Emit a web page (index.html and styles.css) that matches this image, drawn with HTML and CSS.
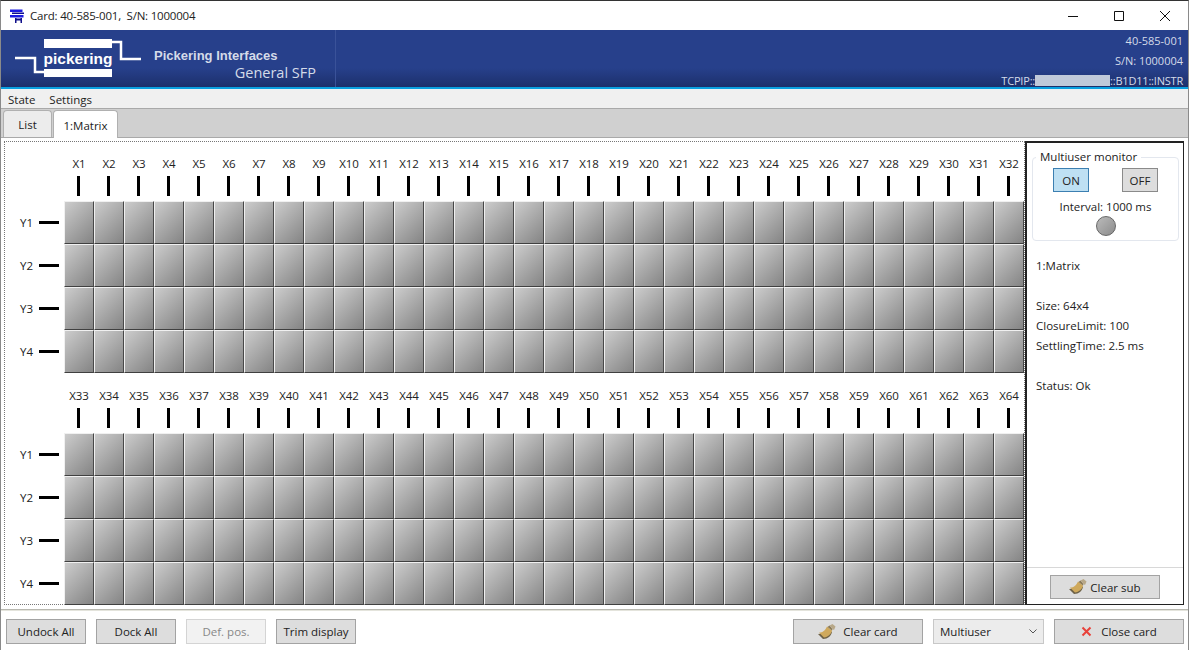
FILE: index.html
```html
<!DOCTYPE html>
<html lang="en">
<head>
    <meta charset="UTF-8">
    <title>Card: 40-585-001, S/N: 1000004</title>
    <link rel="stylesheet" href="styles.css">
</head>
<body>
<div class="window">
    <div class="titlebar">
        <svg class="app-icon" width="16" height="16" viewBox="0 0 16 16">
            <path d="M1 1.500h12.500v2.500H1z" fill="#1a1ae0"/>
            <path d="M3 4.500h12v1.500H3z" fill="#0a0a90"/>
            <path d="M1 7h13.500v2.500H1z" fill="#1a1ae0"/>
            <path d="M6 10h1.500v5H6zM11.500 10H13v5h-1.500zM7.500 10.500h4v2h-4z" fill="#10108a"/>
        </svg>
        <span class="title-text">Card: 40-585-001,&nbsp; S/N: 1000004</span>
        <div class="win-controls">
            <svg width="12" height="12" viewBox="0 0 12 12"><path d="M1 6.500h10" stroke="#111" fill="none"/></svg>
            <svg width="12" height="12" viewBox="0 0 12 12"><path d="M1.500 1.500h9v9h-9z" stroke="#111" fill="none"/></svg>
            <svg width="12" height="12" viewBox="0 0 12 12"><path d="M1 1l10 10M11 1L1 11" stroke="#111" fill="none"/></svg>
        </div>
    </div>

    <div class="banner">
        <div class="brand">
            <svg class="logo" width="130" height="44" viewBox="0 0 130 44">
                <path d="M1 23h20v14h10M98 7h9v17h20" stroke="#fff" stroke-width="2.500" fill="none"/>
                <rect x="30" y="4" width="68" height="9" fill="#fff"/>
                <rect x="30" y="34" width="68" height="8" fill="#fff"/>
                <text x="64" y="29" class="logo-text" text-anchor="middle">pickering</text>
            </svg>
            <div class="brand-names">
                <div class="company">Pickering Interfaces</div>
                <div class="product">General SFP</div>
            </div>
        </div>
        <div class="card-info">
            <div>40-585-001</div>
            <div>S/N: 1000004</div>
            <div class="address">TCPIP::<span class="redacted"></span>::B1D11::INSTR</div>
        </div>
    </div>

    <div class="menu">
        <span>State</span>
        <span>Settings</span>
    </div>

    <div class="tabs">
        <div class="tab">List</div>
        <div class="tab active">1:Matrix</div>
    </div>

    <div class="main">
        <div class="matrix-area" id="matrixArea"></div>
        <div class="side-panel">
            <div class="monitor">
                <div class="monitor-title">Multiuser monitor</div>
                <div class="monitor-buttons">
                    <div class="btn toggle on">ON</div>
                    <div class="btn toggle">OFF</div>
                </div>
                <div class="interval">Interval: 1000 ms</div>
                <div class="led"></div>
            </div>
            <div class="info">
                <p>1:Matrix</p>
                <p class="blank"></p>
                <p>Size: 64x4</p>
                <p>ClosureLimit: 100</p>
                <p>SettlingTime: 2.5 ms</p>
                <p class="blank"></p>
                <p>Status: Ok</p>
            </div>
            <div class="side-footer">
                <div class="btn clear-sub">
                    <svg class="broom" width="18" height="16" viewBox="0 0 18 16">
                        <path d="M0 10c4 0 7-2 9-6l5 4c-1 4-4 7-9 7z" fill="#6e6248"/>
                        <path d="M1 8.500c4 0 6-2 8-6l5 4c-1 4-4 6.500-8 7z" fill="#cfa95c"/>
                        <path d="M9.500 3l2-1.500 3 3.500-.5 1.500z" fill="#8a7a58"/>
                        <path d="M11.500 1.500l3-1.500 3 2.500-1.500 3.500-1.500-1z" fill="#b8a888"/>
                    </svg>
                    Clear sub
                </div>
            </div>
        </div>
    </div>

    <div class="footer">
        <div class="footer-group">
            <div class="btn wide">Undock All</div>
            <div class="btn wide">Dock All</div>
            <div class="btn wide disabled">Def. pos.</div>
            <div class="btn wide">Trim display</div>
        </div>
        <div class="footer-group">
            <div class="btn action">
                <svg class="broom" width="18" height="16" viewBox="0 0 18 16">
                    <path d="M0 10c4 0 7-2 9-6l5 4c-1 4-4 7-9 7z" fill="#6e6248"/>
                    <path d="M1 8.500c4 0 6-2 8-6l5 4c-1 4-4 6.500-8 7z" fill="#cfa95c"/>
                    <path d="M9.500 3l2-1.500 3 3.500-.5 1.500z" fill="#8a7a58"/>
                    <path d="M11.500 1.500l3-1.500 3 2.500-1.500 3.500-1.500-1z" fill="#b8a888"/>
                </svg>
                Clear card
            </div>
            <div class="select">
                <span>Multiuser</span>
                <svg width="8" height="5" viewBox="0 0 8 5"><path d="M.5.500L4 4 7.500.500" stroke="#555" fill="none"/></svg>
            </div>
            <div class="btn action close">
                <svg class="close-x" width="11" height="11" viewBox="0 0 11 11"><path d="M1.500 1.500l8 8M9.500 1.500l-8 8" stroke="#e8413a" stroke-width="2" fill="none"/></svg>
                Close card
            </div>
        </div>
    </div>
</div>
<script src="script.js"></script>
</body>
</html>
```

FILE: styles.css
```css
* {
    box-sizing: border-box;
}
body {
    margin: 0;
    font-family: "Open Sans", Arial, sans-serif;
    font-size: 11.5px;
    color: #222;
    background: #fff;
}
.window {
    width: 1189px;
    height: 650px;
    display: flex;
    flex-direction: column;
    overflow: hidden;
    border-left: 1px solid #8a8a8a;
    border-right: 1px solid #8a8a8a;
    border-top: 1px solid #333;
}

/* title bar */
.titlebar {
    height: 29px;
    flex: none;
    display: flex;
    align-items: center;
    padding-left: 8px;
    background: #fff;
}
.app-icon {
    margin-right: 5px;
}
.title-text {
    letter-spacing: -0.2px;
}
.win-controls {
    margin-left: auto;
    display: flex;
    gap: 34px;
    padding-right: 17px;
}

/* blue banner */
.banner {
    height: 60px;
    flex: none;
    display: flex;
    justify-content: space-between;
    background: linear-gradient(#27408b 0, #27408b 38px, #1f3474 52px, #1c2f6c 57px, #0aa0e0 57px, #0aa0e0 59px, #e8f0f4 59px);
}
.brand {
    width: 335px;
    height: 57px;
    display: flex;
    padding-left: 13px;
    border-right: 1px solid #3a5299;
}
.logo {
    margin-top: 5px;
    flex: none;
}
.logo-text {
    font-family: "Liberation Sans", Arial, sans-serif;
    font-size: 15.500px;
    font-weight: bold;
    fill: #fff;
}
.brand-names {
    margin-left: 10px;
    width: 162px;
    padding-top: 18px;
    color: #d4dbe9;
}
.company {
    font-family: "Liberation Sans", Arial, sans-serif;
    font-size: 13px;
    font-weight: bold;
}
.product {
    font-size: 14.500px;
    text-align: right;
    margin-top: 1px;
    line-height: 18px;
}
.card-info {
    height: 57px;
    padding: 1px 5px 0 0;
    text-align: right;
    color: #d4dbe9;
    font-size: 11px;
    line-height: 20px;
}
.address {
    letter-spacing: -0.2px;
}
.redacted {
    display: inline-block;
    width: 75px;
    height: 11px;
    vertical-align: -1px;
    background: #c0c9d9;
}

/* menu and tabs */
.menu {
    height: 19px;
    flex: none;
    display: flex;
    gap: 14px;
    align-items: center;
    padding-left: 7px;
    background: #f0f0f0;
    border-bottom: 1px solid #a9a9a9;
}
.tabs {
    height: 29px;
    flex: none;
    display: flex;
    gap: 1px;
    align-items: flex-end;
    padding-left: 2px;
    background: #d0d0d0;
    border-bottom: 1px solid #a9a9a9;
}
.tab {
    width: 49px;
    height: 27px;
    text-align: center;
    line-height: 27px;
    background: #ececec;
    border: 1px solid #b0b0b0;
    border-bottom: none;
    border-radius: 4px 4px 0 0;
}
.tab.active {
    width: 65px;
    height: 28px;
    line-height: 30px;
    margin-bottom: -1px;
    background: #fff;
}

/* matrix */
.main {
    height: 472px;
    flex: none;
    display: flex;
    padding: 3px 4px 5px 3px;
    border-bottom: 1px solid #b8b8b0;
}
.matrix-area {
    width: 1021px;
    height: 464px;
    flex: none;
    border: 1px dotted #777;
}
.matrix {
    display: grid;
    grid-template-columns: 59px repeat(32, 30px);
    grid-template-rows: 20px 28px repeat(4, 43px);
    margin-right: -1px;
    padding-top: 11px;
}
.matrix + .matrix {
    padding-top: 12px;
}
.matrix:last-child {
    margin-bottom: -1px;
}
.x-label {
    text-align: center;
    line-height: 21px;
    letter-spacing: -0.1px;
}
.x-tick {
    display: flex;
    justify-content: center;
    padding-top: 3px;
}
.x-tick i {
    display: block;
    width: 3px;
    height: 20px;
    margin-right: 1px;
    background: #000;
}
.y-label {
    display: flex;
    align-items: center;
    justify-content: flex-end;
    gap: 6px;
}
.y-label i {
    display: block;
    width: 20px;
    height: 3px;
    margin-right: 5px;
    background: #000;
}
.cell {
    border: 1px solid;
    border-color: #f0f0f0 #484848 #404040 #f0f0f0;
    background: linear-gradient(135deg, #cccccc, #848484);
}

/* side panel */
.side-panel {
    width: 159px;
    height: 464px;
    flex: none;
    display: flex;
    flex-direction: column;
    border: 2px solid #222;
    border-right-width: 1px;
    border-bottom-width: 1px;
}
.monitor {
    position: relative;
    width: 147px;
    height: 84px;
    margin: 14px 0 0 5px;
    border: 1px solid #e3e7ee;
    border-radius: 4px;
    text-align: center;
}
.monitor-title {
    position: absolute;
    top: -9px;
    left: 3px;
    padding: 0 4px;
    background: #fff;
}
.monitor-buttons {
    display: flex;
    justify-content: space-between;
    padding: 10px 20px 0 20px;
}
.btn {
    display: flex;
    align-items: center;
    justify-content: center;
    background: #dddddd;
    border: 1px solid #a3a3a3;
}
.toggle {
    width: 36px;
    height: 24px;
    border-color: #8a8a8a;
}
.toggle.on {
    background: #bee0f3;
    border-color: #3c7fb1;
}
.interval {
    margin-top: 6px;
    line-height: 18px;
}
.led {
    width: 20px;
    height: 20px;
    margin: 0 auto;
    border-radius: 50%;
    border: 1px solid #666;
    background: linear-gradient(135deg, #bbb, #8c8c8c);
}
.info {
    flex: 1;
    padding: 15px 0 0 9px;
}
.info p {
    margin: 0;
    height: 20px;
    line-height: 20px;
}
.side-footer {
    height: 37px;
    padding-top: 7px;
    border-top: 1px solid #d8d8d8;
}
.clear-sub {
    width: 110px;
    height: 24px;
    margin-left: 23px;
    gap: 3px;
}

/* footer */
.footer {
    flex: 1;
    display: flex;
    justify-content: space-between;
    padding: 8px 4px 0 5px;
    border-top: 1px solid #e4e4dc;
}
.footer-group {
    display: flex;
    gap: 10px;
}
.footer .btn,
.select {
    height: 25px;
}
.wide {
    width: 80px;
}
.disabled {
    background: #f2f2f2;
    border-color: #d4d4d4;
    color: #888;
}
.action {
    width: 130px;
    gap: 7px;
}
.close {
    gap: 9px;
}
.select {
    width: 111px;
    display: flex;
    align-items: center;
    justify-content: space-between;
    padding: 0 6px 0 6px;
    background: #ececec;
    border: 1px solid #c8c8c8;
}
```

FILE: script.js
```javascript
// build the two 32 column crosspoint blocks
function buildMatrix(firstX) {
    const matrix = document.createElement('div');
    matrix.className = 'matrix';

    matrix.appendChild(document.createElement('div'));
    for (let i = 0; i < 32; i++) {
        const label = document.createElement('div');
        label.className = 'x-label';
        label.textContent = 'X' + (firstX + i);
        matrix.appendChild(label);
    }

    matrix.appendChild(document.createElement('div'));
    for (let i = 0; i < 32; i++) {
        const tick = document.createElement('div');
        tick.className = 'x-tick';
        tick.innerHTML = '<i></i>';
        matrix.appendChild(tick);
    }

    for (let y = 1; y <= 4; y++) {
        const label = document.createElement('div');
        label.className = 'y-label';
        label.innerHTML = 'Y' + y + '<i></i>';
        matrix.appendChild(label);
        for (let i = 0; i < 32; i++) {
            const cell = document.createElement('div');
            cell.className = 'cell';
            matrix.appendChild(cell);
        }
    }
    return matrix;
}

const area = document.getElementById('matrixArea');
area.appendChild(buildMatrix(1));
area.appendChild(buildMatrix(33));
```
